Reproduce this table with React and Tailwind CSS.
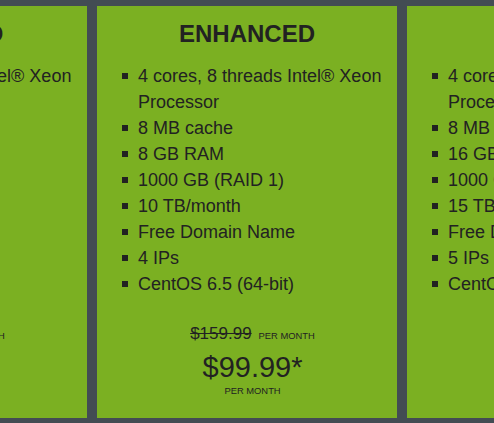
import React from "react";

const cards = [
  {
    title: "STANDARD",
    items: [
      "2 cores, 4 threads Intel® Xeon Processor",
      "4 MB cache",
      "4 GB RAM",
      "500 GB (RAID 1)",
      "5 TB/month",
      "Free Domain Name",
      "2 IPs",
      "CentOS 6.5 (64-bit)",
    ],
    old: "$109.99",
    price: "$69.99*",
  },
  {
    title: "ENHANCED",
    items: [
      "4 cores, 8 threads Intel® Xeon Processor",
      "8 MB cache",
      "8 GB RAM",
      "1000 GB (RAID 1)",
      "10 TB/month",
      "Free Domain Name",
      "4 IPs",
      "CentOS 6.5 (64-bit)",
    ],
    old: "$159.99",
    price: "$99.99*",
  },
  {
    title: "PREMIUM",
    items: [
      "4 cores, 8 threads Intel® Xeon Processor",
      "8 MB cache",
      "16 GB RAM",
      "1000 GB (RAID 1)",
      "15 TB/month",
      "Free Domain Name",
      "5 IPs",
      "CentOS 6.5 (64-bit)",
    ],
    old: "$199.99",
    price: "$139.99*",
  },
];

function Card({ c }) {
  return (
    <div className="w-[300px] h-[412px] shrink-0 bg-[#7bb022] text-[#222222] pt-[14px]">
      <h2 className="text-center text-[24px] leading-[28px] font-bold">{c.title}</h2>
      <ul className="mt-[15px] pl-[25px] pr-[8px]">
        {c.items.map((it, i) => (
          <li key={i} className="flex text-[18px] leading-[26px]">
            <span className="w-[6px] h-[6px] bg-[#222222] mt-[10px] mr-[10px] shrink-0"></span>
            <span>{it}</span>
          </li>
        ))}
      </ul>
      <div className="mt-[27px] pl-[11px] text-center">
        <div className="leading-[20px]">
          <span className="text-[17px] line-through">{c.old}</span>
          <span className="ml-[7px] text-[9.4px]">PER MONTH</span>
        </div>
        <div className="mt-[3px] text-[29px] leading-[36px]">{c.price}</div>
        <div className="text-[9.4px] leading-[12px]">PER MONTH</div>
      </div>
    </div>
  );
}

export default function App() {
  return (
    <div
      className="w-[494px] h-[423px] overflow-hidden bg-[#434c53] pt-[6px]"
      style={{ fontFamily: '"Liberation Sans", Arial, sans-serif' }}
    >
      <div className="flex gap-[10px] ml-[-213px]">
        {cards.map((c, i) => (
          <Card key={i} c={c} />
        ))}
      </div>
    </div>
  );
}
